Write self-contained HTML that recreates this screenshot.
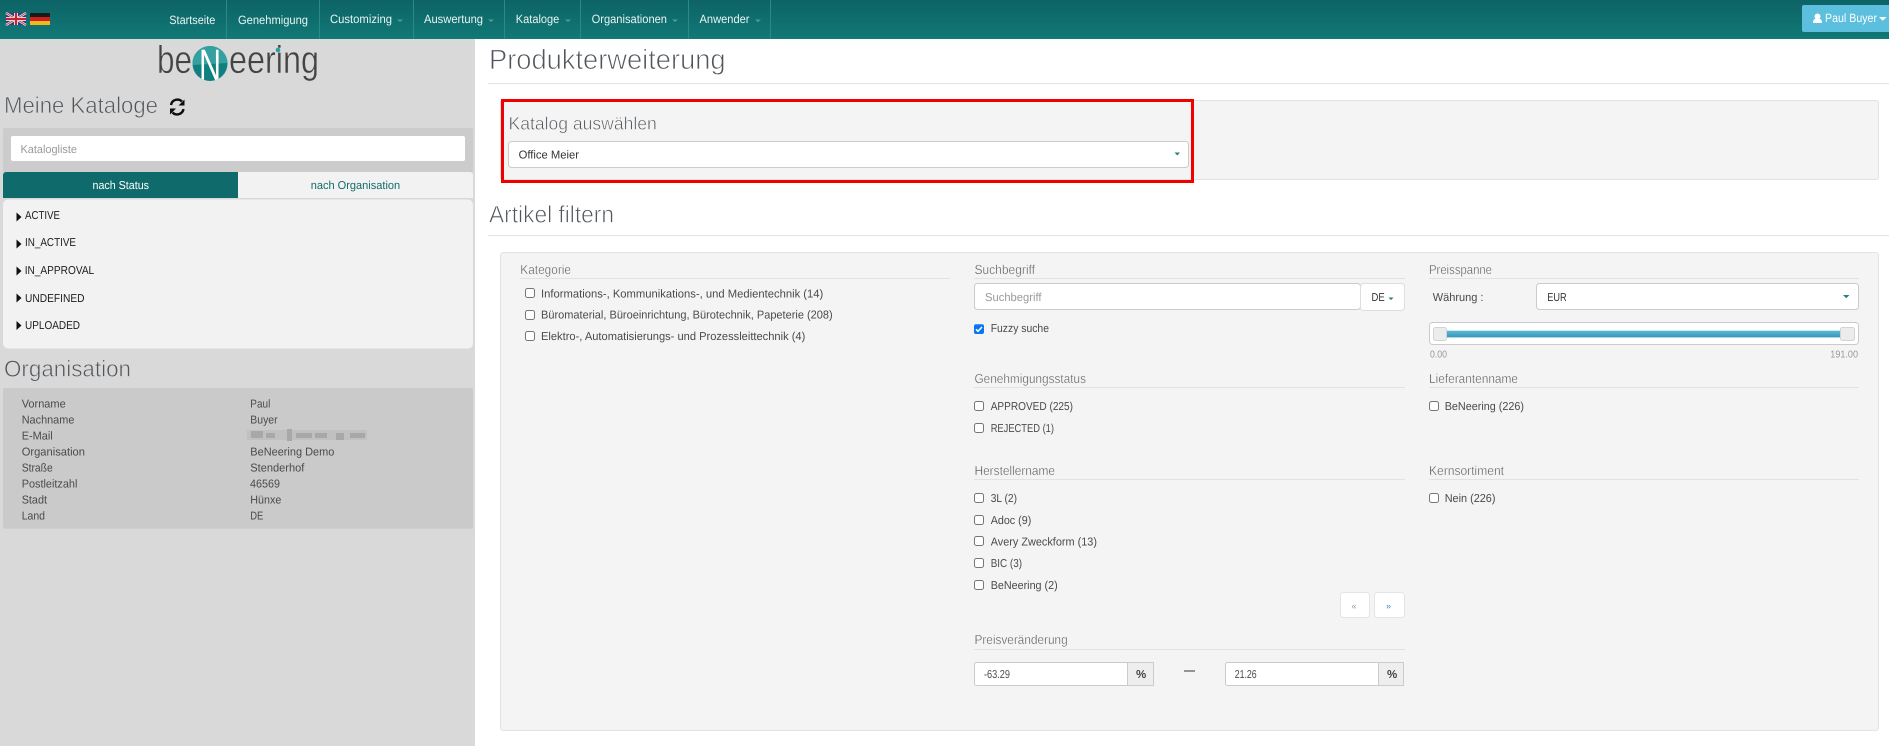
<!DOCTYPE html>
<html lang="de"><head><meta charset="utf-8"><title>Produkterweiterung</title>
<style>
html,body{margin:0;padding:0;background:#fff;width:1889px;height:746px;overflow:hidden}
svg{display:block;position:absolute;left:0;top:0}
text{font-family:"Liberation Sans",sans-serif;font-size:11.5px;fill:#4a4a4a;text-rendering:geometricPrecision}
.nav{fill:#e9f3f2;font-size:12px}
.h{font-size:13px;fill:#5a5a5a;stroke:#f4f4f4;stroke-width:.3}
.side{font-size:11.5px;fill:#4a4a4a}
.st{font-size:11.5px;fill:#1c1c1c}
.big{fill:#50565b}
.ln{stroke:#e2e2e2;stroke-width:1;fill:none}
.cb{fill:#fff;stroke:#767676;stroke-width:1}
.ph{fill:#9a9a9a}
</style></head><body>
<svg width="1889" height="746" viewBox="0 0 1889 746" xmlns="http://www.w3.org/2000/svg">
<defs>
<linearGradient id="nv" x1="0" y1="0" x2="0" y2="1"><stop offset="0" stop-color="#0d6365"/><stop offset="1" stop-color="#117977"/></linearGradient>
<linearGradient id="bar" x1="0" y1="0" x2="0" y2="1"><stop offset="0" stop-color="#5cb9d3"/><stop offset="1" stop-color="#3798b8"/></linearGradient>
<clipPath id="logoC"><circle cx="210" cy="63.5" r="17.5"/></clipPath>
</defs>

<!-- top navbar -->
<rect x="0" y="0" width="1889" height="39" fill="url(#nv)"/>
<g stroke="#2a8a88" stroke-width="1">
<path d="M226.5 0V39M319.5 0V39M413.5 0V39M504.5 0V39M580.5 0V39M688.5 0V39M770.5 0V39"/>
</g>
<!-- flags -->
<g>
<rect x="6" y="13" width="20" height="12" fill="#2b3f86"/>
<path d="M6 13L26 25M26 13L6 25" stroke="#e8e8ee" stroke-width="2.4"/>
<path d="M6 13L26 25M26 13L6 25" stroke="#c8363f" stroke-width=".8"/>
<path d="M16 13V25M6 19H26" stroke="#e8e8ee" stroke-width="4"/>
<path d="M16 13V25M6 19H26" stroke="#c8202c" stroke-width="2.2"/>
<rect x="30" y="13" width="20" height="4" fill="#1a1a1a"/>
<rect x="30" y="17" width="20" height="4" fill="#cf1f1f"/>
<rect x="30" y="21" width="20" height="4" fill="#edbb1c"/>
</g>
<text class="nav" x="169.3" y="24" textLength="46" lengthAdjust="spacingAndGlyphs">Startseite</text>
<text class="nav" x="238" y="24" textLength="70" lengthAdjust="spacingAndGlyphs">Genehmigung</text>
<text class="nav" x="330" y="23" textLength="62" lengthAdjust="spacingAndGlyphs">Customizing</text>
<text class="nav" x="424" y="23" textLength="59" lengthAdjust="spacingAndGlyphs">Auswertung</text>
<text class="nav" x="515.8" y="23" textLength="43.5" lengthAdjust="spacingAndGlyphs">Kataloge</text>
<text class="nav" x="591.6" y="23" textLength="75.4" lengthAdjust="spacingAndGlyphs">Organisationen</text>
<text class="nav" x="699.5" y="23" textLength="50" lengthAdjust="spacingAndGlyphs">Anwender</text>
<g fill="#4e9c9a">
<path d="M397 19.5h6l-3 2.6zM488 19.5h6l-3 2.6zM565 19.5h6l-3 2.6zM672 19.5h6l-3 2.6zM755 19.5h6l-3 2.6z"/>
</g>
<!-- user button -->
<path d="M1889 5H1804a2 2 0 0 0-2 2V30a2 2 0 0 0 2 2H1889Z" fill="#5bbfdd"/>
<circle cx="1817.5" cy="16.5" r="3" fill="#fff"/>
<path d="M1813 23c0-3.5 1.5-4.5 4.5-4.5s4.5 1 4.500 4.500z" fill="#fff"/>
<text x="1825" y="22" textLength="52" lengthAdjust="spacingAndGlyphs" style="fill:#fff;font-size:12px">Paul Buyer</text>
<path d="M1879 17h7.5l-3.750 3.8z" fill="#fff"/>

<!-- sidebar -->
<rect x="0" y="39" width="475" height="707" fill="#d9d9d9"/>
<!-- logo -->
<text x="157" y="73" textLength="35" lengthAdjust="spacingAndGlyphs" style="font-size:39px;fill:#444;stroke:#d9d9d9;stroke-width:.5">be</text>
<text x="229" y="73" textLength="90" lengthAdjust="spacingAndGlyphs" style="font-size:39px;fill:#444;stroke:#d9d9d9;stroke-width:.5">eering</text>
<circle cx="278" cy="50" r="2.3" fill="#2a9d9d"/>
<circle cx="210" cy="63.5" r="17.5" fill="#0f7f7f"/>
<path d="M192 46H228V63L192 65Z" fill="#35a0a0" clip-path="url(#logoC)"/>
<text x="199" y="80" textLength="22" lengthAdjust="spacingAndGlyphs" style="font-size:44px;fill:#fff" clip-path="url(#logoC)">N</text>

<text class="big" x="4" y="113" textLength="154" lengthAdjust="spacingAndGlyphs" style="font-size:23px;stroke:#d9d9d9;stroke-width:.65">Meine Kataloge</text>
<!-- refresh icon -->
<g fill="none" stroke="#0d0d0d" stroke-width="2.4">
<path d="M171 105a6.5 6.5 0 0 1 11-3.5"/>
<path d="M183.5 109a6.5 6.5 0 0 1-11 3.5"/>
</g>
<path d="M184.5 99.5v6h-6zM170 114.5v-6h6z" fill="#0d0d0d"/>

<rect x="3" y="128" width="470" height="45" rx="2" fill="#cccccc"/>
<rect x="11" y="136" width="454" height="25" rx="2" fill="#fff"/>
<text class="ph" x="20.5" y="153" textLength="56.5" lengthAdjust="spacingAndGlyphs">Katalogliste</text>

<path d="M238 172H6a3 3 0 0 0-3 3V198H238Z" fill="#0f6b6b"/>
<path d="M238 172H470a3 3 0 0 1 3 3V198H238Z" fill="#f2f2f2"/>
<text x="92.5" y="189" textLength="56.5" lengthAdjust="spacingAndGlyphs" style="fill:#fff">nach Status</text>
<text x="310.7" y="189" textLength="89.5" lengthAdjust="spacingAndGlyphs" style="fill:#136c6c">nach Organisation</text>

<rect x="3" y="199.5" width="470" height="149" rx="5" fill="#f2f2f2"/>
<path d="M16.5 212.5l5 4.5-5 4.500zM16.5 239.5l5 4.5-5 4.500zM16.5 266.5l5 4.5-5 4.500zM16.5 293.5l5 4.5-5 4.500zM16.5 321l5 4.5-5 4.500z" fill="#111"/>
<text class="st" x="25" y="219" textLength="35" lengthAdjust="spacingAndGlyphs">ACTIVE</text>
<text class="st" x="25" y="246" textLength="51" lengthAdjust="spacingAndGlyphs">IN_ACTIVE</text>
<text class="st" x="24.7" y="274" textLength="69.5" lengthAdjust="spacingAndGlyphs">IN_APPROVAL</text>
<text class="st" x="25" y="302" textLength="59.5" lengthAdjust="spacingAndGlyphs">UNDEFINED</text>
<text class="st" x="25" y="329" textLength="55" lengthAdjust="spacingAndGlyphs">UPLOADED</text>

<text class="big" x="4" y="376.7" textLength="127" lengthAdjust="spacingAndGlyphs" style="font-size:23px;stroke:#d9d9d9;stroke-width:.65">Organisation</text>
<rect x="3" y="388" width="470" height="140.7" rx="2" fill="#cacaca"/>
<text class="side" x="21.7" y="407.3" textLength="44" lengthAdjust="spacingAndGlyphs">Vorname</text>
<text class="side" x="21.7" y="423.3" textLength="52.7" lengthAdjust="spacingAndGlyphs">Nachname</text>
<text class="side" x="21.7" y="439.3" textLength="31" lengthAdjust="spacingAndGlyphs">E-Mail</text>
<text class="side" x="21.7" y="455.3" textLength="63.3" lengthAdjust="spacingAndGlyphs">Organisation</text>
<text class="side" x="21.7" y="471.3" textLength="31" lengthAdjust="spacingAndGlyphs">Straße</text>
<text class="side" x="21.7" y="487.3" textLength="55.7" lengthAdjust="spacingAndGlyphs">Postleitzahl</text>
<text class="side" x="21.7" y="503.3" textLength="25.3" lengthAdjust="spacingAndGlyphs">Stadt</text>
<text class="side" x="21.7" y="519.3" textLength="23.3" lengthAdjust="spacingAndGlyphs">Land</text>
<text class="side" x="250.3" y="407.3" textLength="20" lengthAdjust="spacingAndGlyphs">Paul</text>
<text class="side" x="250.3" y="423.3" textLength="27.3" lengthAdjust="spacingAndGlyphs">Buyer</text>
<text class="side" x="250.3" y="455.3" textLength="84" lengthAdjust="spacingAndGlyphs">BeNeering Demo</text>
<text class="side" x="250.3" y="471.3" textLength="54" lengthAdjust="spacingAndGlyphs">Stenderhof</text>
<text class="side" x="250" y="487.3" textLength="30" lengthAdjust="spacingAndGlyphs">46569</text>
<text class="side" x="250.3" y="503.3" textLength="31" lengthAdjust="spacingAndGlyphs">Hünxe</text>
<text class="side" x="250.3" y="519.3" textLength="13" lengthAdjust="spacingAndGlyphs">DE</text>
<!-- blurred e-mail -->
<rect x="247" y="430" width="120" height="10" fill="#c0c0c0"/>
<g fill="#a8a8a8">
<rect x="251" y="431" width="12" height="7"/><rect x="266" y="433" width="9" height="5"/><rect x="287" y="429" width="5" height="12"/>
<rect x="296" y="433" width="16" height="5"/><rect x="315" y="433" width="12" height="5"/><rect x="336" y="433" width="8" height="7"/><rect x="350" y="433" width="15" height="5"/>
</g>

<!-- main header -->
<text class="big" x="489" y="69" textLength="236.6" lengthAdjust="spacingAndGlyphs" style="font-size:28px;stroke:#fff;stroke-width:.8">Produkterweiterung</text>
<path class="ln" d="M488 83.5H1889"/>

<!-- Katalog panel -->
<rect x="500.5" y="100.5" width="1378" height="79" rx="2" fill="#f4f4f4" stroke="#e3e3e3"/>
<text class="big" x="508.5" y="129.3" textLength="148.3" lengthAdjust="spacingAndGlyphs" style="font-size:18px;stroke:#f4f4f4;stroke-width:.55">Katalog auswählen</text>
<rect x="508.5" y="141.5" width="680" height="26" rx="3" fill="#fff" stroke="#cbcbcb"/>
<text x="518.6" y="158.7" textLength="60.4" lengthAdjust="spacingAndGlyphs" style="fill:#333">Office Meier</text>
<path d="M1174.5 152.5h5.5l-2.75 3z" fill="#2a8080"/>
<rect x="502.5" y="100.5" width="690" height="81" fill="none" stroke="#f00000" stroke-width="3"/>

<text class="big" x="489" y="222.7" textLength="125" lengthAdjust="spacingAndGlyphs" style="font-size:24px;stroke:#fff;stroke-width:.7">Artikel filtern</text>
<path class="ln" d="M488 235.5H1889"/>

<!-- filter panel -->
<rect x="500.5" y="252.5" width="1378" height="478" rx="3" fill="#f4f4f4" stroke="#e3e3e3"/>

<!-- col 1 -->
<text class="h" x="520.3" y="274" textLength="50.7" lengthAdjust="spacingAndGlyphs">Kategorie</text>
<path class="ln" d="M520 278.5H950"/>
<rect class="cb" x="525.5" y="288.5" width="9" height="9" rx="2"/>
<rect class="cb" x="525.5" y="310.5" width="9" height="9" rx="2"/>
<rect class="cb" x="525.5" y="331.5" width="9" height="9" rx="2"/>
<text x="541" y="297.3" textLength="282.3" lengthAdjust="spacingAndGlyphs">Informations-, Kommunikations-, und Medientechnik (14)</text>
<text x="541" y="318.3" textLength="291.7" lengthAdjust="spacingAndGlyphs">Büromaterial, Büroeinrichtung, Bürotechnik, Papeterie (208)</text>
<text x="541" y="340" textLength="264.3" lengthAdjust="spacingAndGlyphs">Elektro-, Automatisierungs- und Prozessleittechnik (4)</text>

<!-- col 2 -->
<text class="h" x="974.5" y="274" textLength="60.5" lengthAdjust="spacingAndGlyphs">Suchbegriff</text>
<path class="ln" d="M974 278.5H1405"/>
<rect x="974.5" y="283.5" width="386" height="26" rx="3" fill="#fff" stroke="#cbcbcb"/>
<rect x="1360.5" y="283.5" width="44" height="27" rx="3" fill="#fff" stroke="#dedede"/>
<text class="ph" x="985" y="301" textLength="56.5" lengthAdjust="spacingAndGlyphs">Suchbegriff</text>
<text x="1371.5" y="301" textLength="13.2" lengthAdjust="spacingAndGlyphs" style="fill:#333">DE</text>
<path d="M1388.5 297.5h5l-2.5 2.6z" fill="#2a8080"/>

<rect x="974" y="324.3" width="10" height="9.7" rx="2" fill="#0b76ef"/>
<path d="M976 329.3l2 2 4-4.3" fill="none" stroke="#fff" stroke-width="1.5"/>
<text x="990.7" y="332" textLength="58.3" lengthAdjust="spacingAndGlyphs">Fuzzy suche</text>

<text class="h" x="974.5" y="383" textLength="111.5" lengthAdjust="spacingAndGlyphs">Genehmigungsstatus</text>
<path class="ln" d="M974 387.5H1405"/>
<rect class="cb" x="974.5" y="401.5" width="9" height="9" rx="2"/>
<rect class="cb" x="974.5" y="423.5" width="9" height="9" rx="2"/>
<text x="990.7" y="410" textLength="82.3" lengthAdjust="spacingAndGlyphs">APPROVED (225)</text>
<text x="990.7" y="432" textLength="63.3" lengthAdjust="spacingAndGlyphs">REJECTED (1)</text>

<text class="h" x="974.5" y="475" textLength="80.5" lengthAdjust="spacingAndGlyphs">Herstellername</text>
<path class="ln" d="M974 479.5H1405"/>
<rect class="cb" x="974.5" y="493.5" width="9" height="9" rx="2"/>
<rect class="cb" x="974.5" y="515.5" width="9" height="9" rx="2"/>
<rect class="cb" x="974.5" y="536.5" width="9" height="9" rx="2"/>
<rect class="cb" x="974.5" y="558.5" width="9" height="9" rx="2"/>
<rect class="cb" x="974.5" y="580.5" width="9" height="9" rx="2"/>
<text x="990.7" y="502" textLength="26.3" lengthAdjust="spacingAndGlyphs">3L (2)</text>
<text x="990.7" y="524" textLength="40.6" lengthAdjust="spacingAndGlyphs">Adoc (9)</text>
<text x="990.7" y="545.5" textLength="106.3" lengthAdjust="spacingAndGlyphs">Avery Zweckform (13)</text>
<text x="990.7" y="567" textLength="31.3" lengthAdjust="spacingAndGlyphs">BIC (3)</text>
<text x="990.7" y="589" textLength="67" lengthAdjust="spacingAndGlyphs">BeNeering (2)</text>

<rect x="1340.5" y="592.5" width="29" height="25" rx="3" fill="#fff" stroke="#e4e4e4"/>
<rect x="1374.5" y="592.5" width="30" height="25" rx="3" fill="#fff" stroke="#e4e4e4"/>
<text x="1351.5" y="609" style="fill:#999;font-size:9px">«</text>
<text x="1386" y="609" style="fill:#3a87c0;font-size:9px">»</text>

<text class="h" x="974.5" y="644" textLength="93.2" lengthAdjust="spacingAndGlyphs">Preisveränderung</text>
<path class="ln" d="M974 649.5H1405"/>
<rect x="974.5" y="662.5" width="179" height="23" rx="2" fill="#fff" stroke="#cbcbcb"/>
<rect x="1127.5" y="662.5" width="26" height="23" fill="#eeeeee" stroke="#cbcbcb"/>
<text x="984" y="678" textLength="26" lengthAdjust="spacingAndGlyphs">-63.29</text>
<text x="1136" y="678" style="font-size:11.5px;font-weight:bold;fill:#444">%</text>
<rect x="1184" y="670.5" width="11" height="1" fill="#333"/>
<rect x="1225.5" y="662.5" width="178" height="23" rx="2" fill="#fff" stroke="#cbcbcb"/>
<rect x="1378.5" y="662.5" width="25" height="23" fill="#eeeeee" stroke="#cbcbcb"/>
<text x="1234.7" y="678" textLength="22" lengthAdjust="spacingAndGlyphs">21.26</text>
<text x="1387" y="678" style="font-size:11.5px;font-weight:bold;fill:#444">%</text>

<!-- col 3 -->
<text class="h" x="1429" y="274" textLength="63" lengthAdjust="spacingAndGlyphs">Preisspanne</text>
<path class="ln" d="M1429 278.5H1859"/>
<text x="1432.7" y="301" textLength="50.8" lengthAdjust="spacingAndGlyphs">Währung :</text>
<rect x="1536.5" y="283.5" width="322" height="26" rx="3" fill="#fff" stroke="#cbcbcb"/>
<text x="1547.3" y="301" textLength="19.4" lengthAdjust="spacingAndGlyphs" style="fill:#333">EUR</text>
<path d="M1843 295h6.5l-3.25 3.2z" fill="#2a8080"/>

<rect x="1429.5" y="322.5" width="429" height="22" rx="3" fill="#fff" stroke="#cbcbcb"/>
<rect x="1447" y="330.7" width="393" height="6.7" fill="url(#bar)"/>
<rect x="1433.5" y="327.5" width="13" height="13" rx="2" fill="#ececec" stroke="#d4d4d4"/>
<rect x="1840.5" y="327.5" width="14" height="13" rx="2" fill="#ececec" stroke="#d4d4d4"/>
<text x="1430" y="357.7" textLength="17" lengthAdjust="spacingAndGlyphs" style="font-size:10px;fill:#999">0.00</text>
<text x="1830.3" y="357.7" textLength="27.7" lengthAdjust="spacingAndGlyphs" style="font-size:10px;fill:#999">191.00</text>

<text class="h" x="1429" y="383" textLength="89" lengthAdjust="spacingAndGlyphs">Lieferantenname</text>
<path class="ln" d="M1429 387.5H1859"/>
<rect class="cb" x="1429.5" y="401.5" width="9" height="9" rx="2"/>
<text x="1444.7" y="410" textLength="79.3" lengthAdjust="spacingAndGlyphs">BeNeering (226)</text>

<text class="h" x="1429" y="475" textLength="75" lengthAdjust="spacingAndGlyphs">Kernsortiment</text>
<path class="ln" d="M1429 479.5H1859"/>
<rect class="cb" x="1429.5" y="493.5" width="9" height="9" rx="2"/>
<text x="1444.7" y="502" textLength="50.8" lengthAdjust="spacingAndGlyphs">Nein (226)</text>
</svg>
</body></html>
